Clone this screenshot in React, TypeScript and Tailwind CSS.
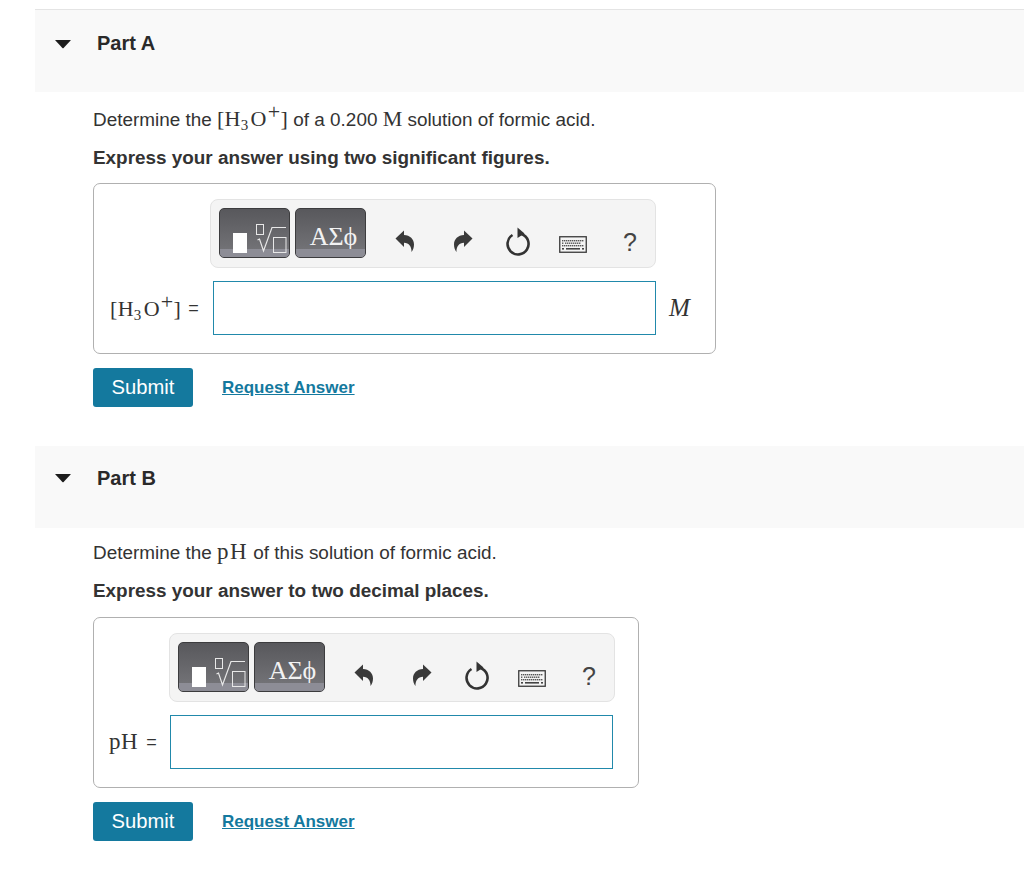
import React from "react";

const sans = "font-['Liberation_Sans',Arial,sans-serif]";
const serif = "font-['Liberation_Serif','DejaVu_Serif',serif]";

function Caret() {
  return (
    <svg width="16" height="10" viewBox="0 0 16 10" className="block">
      <path d="M0.5 1 H15.5 Q16 1 15.6 1.6 L8.6 9 Q8 9.6 7.4 9 L0.4 1.6 Q0 1 0.5 1 Z" fill="#1c1c1c" />
    </svg>
  );
}

function TemplatesButton() {
  return (
    <div className="relative w-[71px] h-[50px] rounded-[5px] border border-[#3c3c3e] overflow-hidden bg-gradient-to-b from-[#58585c] to-[#77777b]">
      <div className="absolute left-0 right-0 bottom-0 h-[8px] bg-[#8d8d96]" />
      <svg width="71" height="50" viewBox="0 0 71 50" className="absolute left-[-1px] top-[-1px]">
        <rect x="14" y="25" width="14" height="20" fill="#ffffff" />
        <rect x="37.5" y="16.5" width="7" height="10" fill="none" stroke="#e8e8e8" strokeWidth="1" />
        <path d="M38.5 32 L40.5 31 L44.5 43 L53 19.5 H67" fill="none" stroke="#e8e8e8" strokeWidth="1.2" />
        <rect x="54.5" y="29.5" width="12.5" height="15" fill="none" stroke="#e8e8e8" strokeWidth="1" />
      </svg>
    </div>
  );
}

function SymbolsButton() {
  return (
    <div className={`relative w-[71px] h-[50px] rounded-[5px] border border-[#3c3c3e] overflow-hidden bg-gradient-to-b from-[#58585c] to-[#77777b] ${serif}`}>
      <div className="absolute left-[6px] right-0 top-[15px] text-center text-[26px] leading-[26px] text-[#f2f2f2]">ΑΣϕ</div>
      <div className="absolute left-0 right-0 bottom-0 h-[8px] bg-[#8d8d96]" />
    </div>
  );
}

function Undo() {
  return (
    <svg width="20" height="24" viewBox="0 0 20 24" className="block">
      <path d="M0.5 9.5 L9 1.5 V6 C15 6.2 19 10 19 15.5 C19 18.5 18 21 16.5 23 C16.8 18 14 13.8 9 13.8 V18 Z" fill="#3a3a3a" />
    </svg>
  );
}

function Redo() {
  return (
    <svg width="20" height="24" viewBox="0 0 20 24" className="block">
      <path d="M19.5 9.5 L11 1.5 V6 C5 6.2 1 10 1 15.5 C1 18.5 2 21 3.5 23 C3.2 18 6 13.8 11 13.8 V18 Z" fill="#3a3a3a" />
    </svg>
  );
}

function Reset() {
  return (
    <svg width="26" height="30" viewBox="0 0 26 30" className="block">
      <path d="M7.5 9 A10.5 10.5 0 1 0 16.5 8" fill="none" stroke="#333333" strokeWidth="2.6" />
      <path d="M12.5 1.5 L19.5 7.5 L12.5 12 Z" fill="#333333" />
    </svg>
  );
}

function Keyboard() {
  const rows = [
    { y: 4, xs: [3, 5, 7, 9, 11, 13, 15, 17, 19, 21, 23] },
    { y: 6.5, xs: [3, 6, 8, 10, 12, 14, 16, 18, 20] },
    { y: 9, xs: [3, 5, 7, 9, 11, 13, 15, 17, 19, 21, 23] },
  ];
  return (
    <svg width="28" height="18" viewBox="0 0 28 18" className="block">
      <rect x="0.75" y="0.75" width="26.5" height="15.5" fill="#f4f4f4" stroke="#3a3a3a" strokeWidth="1.3" />
      {rows.map((r) => r.xs.map((x) => <rect key={`${r.y}-${x}`} x={x} y={r.y} width="1.4" height="1.4" fill="#555555" />))}
      <rect x="3" y="12" width="2" height="1.6" fill="#444444" />
      <rect x="7" y="12" width="14" height="1.6" fill="#444444" />
      <rect x="23" y="12" width="2" height="1.6" fill="#444444" />
    </svg>
  );
}

function Toolbar({ className }: { className: string }) {
  return (
    <div className={`flex items-start h-[69px] w-[446px] rounded-[8px] border border-[#e3e3e3] bg-[#f4f4f4] pl-[8px] pt-[8px] ${className}`}>
      <TemplatesButton />
      <div className="ml-[5px]"><SymbolsButton /></div>
      <div className="ml-[29px] mt-[21px]"><Undo /></div>
      <div className="ml-[38px] mt-[21px]"><Redo /></div>
      <div className="ml-[32px] mt-[18px]"><Reset /></div>
      <div className="ml-[28px] mt-[28px]"><Keyboard /></div>
      <div className={`ml-[36px] mt-[19px] text-[25px] leading-[30px] text-[#444444] ${sans}`}>?</div>
    </div>
  );
}

function Actions() {
  return (
    <div className={`flex items-center mt-[14px] ${sans}`}>
      <div className="w-[100px] h-[39px] rounded-[3px] bg-[#14799e] text-white text-[20.2px] flex items-center justify-center">Submit</div>
      <div className="ml-[29px] text-[17px] font-bold underline text-[#14799e]">Request Answer</div>
    </div>
  );
}

function Header({ title, caretTop, titleTop }: { title: string; caretTop: string; titleTop: string }) {
  return (
    <div className={`flex items-start h-[82px] bg-[#f9f9f9] ${sans}`}>
      <div className={`ml-[20px] ${caretTop}`}><Caret /></div>
      <div className={`ml-[26px] ${titleTop} text-[20px] leading-[24px] font-bold text-[#2a2a2a]`}>{title}</div>
    </div>
  );
}

function H3OInline() {
  return (
    <span className={`${serif} text-[22px] leading-[0] tracking-[0.3px]`}>
      [H
      <span className="text-[15px] align-[-4px] leading-[0] mr-[2px]">3</span>
      O
      <span className="text-[22px] align-[7px] leading-[0] ml-[1px]">+</span>]
    </span>
  );
}

export default function App() {
  return (
    <div className={`w-[1024px] h-[887px] overflow-hidden bg-white pt-[9px] pl-[35px] text-[#333333] ${sans}`}>
      <div className="border-t border-[#e4e4e4]">
        <Header title="Part A" caretTop="mt-[29px]" titleTop="mt-[21px]" />
      </div>
      <div className="pl-[58px] pt-[16px] h-[354px]">
        <p className="text-[18.9px] leading-[24px]">
          Determine the <H3OInline /> of a 0.200 <span className={`${serif} text-[22px] leading-[0]`}>M</span> solution of formic acid.
        </p>
        <p className="mt-[14px] text-[18.9px] leading-[24px] font-bold">Express your answer using two significant figures.</p>
        <div className="mt-[13px] w-[623px] h-[171px] rounded-[7px] border border-[#b0b0b0] pt-[15px]">
          <Toolbar className="ml-[116px]" />
          <div className="flex items-center mt-[13px]">
            <div className="w-[119px] pl-[16px] whitespace-nowrap flex items-center">
              <H3OInline />
              <span className="ml-[7px] text-[18px]">=</span>
            </div>
            <div className="w-[443px] h-[54px] border border-[#2189ab] bg-white" />
            <div className={`ml-[13px] ${serif} italic text-[25px]`}>M</div>
          </div>
        </div>
        <Actions />
      </div>
      <Header title="Part B" caretTop="mt-[27px]" titleTop="mt-[20px]" />
      <div className="pl-[58px] pt-[13px]">
        <p className="text-[18.9px] leading-[24px]">
          Determine the <span className={`${serif} text-[23px] leading-[0] tracking-[1.5px]`}>pH</span> of this solution of formic acid.
        </p>
        <p className="mt-[14px] text-[18.9px] leading-[24px] font-bold">Express your answer to two decimal places.</p>
        <div className="mt-[14px] w-[546px] h-[171px] rounded-[7px] border border-[#b0b0b0] pt-[15px]">
          <Toolbar className="ml-[75px]" />
          <div className="flex items-center mt-[13px]">
            <div className="w-[76px] pl-[15px] whitespace-nowrap flex items-center">
              <span className={`${serif} text-[23px] tracking-[0.5px]`}>pH</span>
              <span className="ml-[8px] text-[18px]">=</span>
            </div>
            <div className="w-[443px] h-[54px] border border-[#2189ab] bg-white" />
          </div>
        </div>
        <Actions />
      </div>
    </div>
  );
}
